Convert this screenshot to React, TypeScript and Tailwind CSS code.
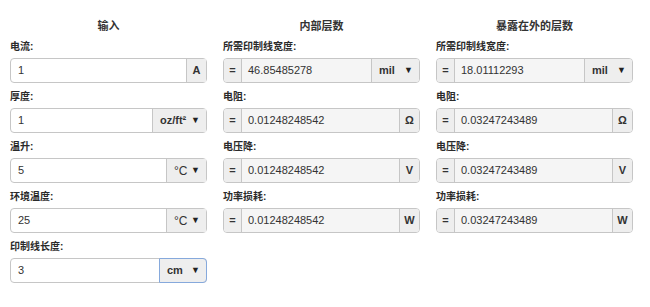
import React from "react";

const font = { fontFamily: '"Liberation Sans", "Noto Sans CJK SC", sans-serif' };

function Arrow() {
  return <span className="text-[9px] leading-none text-[#222]">▼</span>;
}

function Label({ children }: { children: React.ReactNode }) {
  return (
    <div className="h-[16px] mb-[3px] text-[10px] leading-[16px] font-bold text-[#2a2a2a]">
      {children}
    </div>
  );
}

function UnitAddon({ u }: { u: string }) {
  return (
    <div className="w-[20px] shrink-0 border-l border-[#c6c6c6] bg-[#eeeeee] flex items-center justify-center text-[11px] font-bold text-[#333]">
      {u}
    </div>
  );
}

function SelectAddon({ u, w, focus, light }: { u: string; w: string; focus?: boolean; light?: boolean }) {
  const weight = light ? "font-normal text-[12px]" : "font-bold text-[11px]";
  if (focus) {
    return (
      <div
        className={`${w} ${weight} shrink-0 relative -my-px -mr-px border border-[#86a9dc] rounded-r-[4px] bg-[#eeeeee] flex items-center justify-between pl-[7px] pr-[6px] text-[#333]`}
      >
        <span>{u}</span>
        <Arrow />
      </div>
    );
  }
  return (
    <div
      className={`${w} ${weight} shrink-0 border-l border-[#c6c6c6] bg-[#eeeeee] flex items-center justify-between pl-[7px] pr-[6px] text-[#333]`}
    >
      <span>{u}</span>
      <Arrow />
    </div>
  );
}

type Unit =
  | { kind: "unit"; u: string }
  | { kind: "select"; u: string; w: string; focus?: boolean; light?: boolean };

function InputRow({ label, value, unit }: { label: string; value: string; unit: Unit }) {
  return (
    <div className="mb-[6px]">
      <Label>{label}</Label>
      <div className="flex h-[25px] rounded-[4px] border border-[#c6c6c6] bg-white">
        <div className="flex-1 flex items-center pl-[7px] text-[11px] text-[#333] rounded-l-[4px]">{value}</div>
        {unit.kind === "unit" ? (
          <UnitAddon u={unit.u} />
        ) : (
          <SelectAddon u={unit.u} w={unit.w} focus={unit.focus} light={unit.light} />
        )}
      </div>
    </div>
  );
}

function OutputRow({ label, value, unit }: { label: string; value: string; unit: Unit }) {
  return (
    <div className="mb-[6px]">
      <Label>{label}</Label>
      <div className="flex h-[25px] rounded-[4px] border border-[#c6c6c6] overflow-hidden">
        <div className="w-[18px] shrink-0 border-r border-[#c6c6c6] bg-[#eeeeee] flex items-center justify-center text-[11px] font-bold text-[#333]">
          =
        </div>
        <div className="flex-1 flex items-center pl-[6px] text-[11px] text-[#333] bg-[#f5f5f5]">{value}</div>
        {unit.kind === "unit" ? <UnitAddon u={unit.u} /> : <SelectAddon u={unit.u} w={unit.w} />}
      </div>
    </div>
  );
}

function Heading({ children }: { children: React.ReactNode }) {
  return (
    <div className="pt-[17px] h-[39px] text-center text-[11px] leading-[18px] font-bold text-[#333]">
      {children}
    </div>
  );
}

function OutputColumn({ title, width, r }: { title: string; width: string; r: string }) {
  return (
    <div>
      <Heading>{title}</Heading>
      <OutputRow label="所需印制线宽度:" value={width} unit={{ kind: "select", u: "mil", w: "w-[48px]" }} />
      <OutputRow label="电阻:" value={r} unit={{ kind: "unit", u: "Ω" }} />
      <OutputRow label="电压降:" value={r} unit={{ kind: "unit", u: "V" }} />
      <OutputRow label="功率损耗:" value={r} unit={{ kind: "unit", u: "W" }} />
    </div>
  );
}

export default function App() {
  return (
    <div className="w-[650px] h-[307px] bg-white overflow-hidden" style={font}>
      <div className="grid grid-cols-[197px_197px_197px] gap-x-[16px] pl-[10px]">
        <div>
          <Heading>输入</Heading>
          <InputRow label="电流:" value="1" unit={{ kind: "unit", u: "A" }} />
          <InputRow label="厚度:" value="1" unit={{ kind: "select", u: "oz/ft²", w: "w-[54px]" }} />
          <InputRow label="温升:" value="5" unit={{ kind: "select", u: "°C", w: "w-[40px]", light: true }} />
          <InputRow label="环境温度:" value="25" unit={{ kind: "select", u: "°C", w: "w-[40px]", light: true }} />
          <InputRow label="印制线长度:" value="3" unit={{ kind: "select", u: "cm", w: "w-[48px]", focus: true }} />
        </div>
        <OutputColumn title="内部层数" width="46.85485278" r="0.01248248542" />
        <OutputColumn title="暴露在外的层数" width="18.01112293" r="0.03247243489" />
      </div>
    </div>
  );
}
